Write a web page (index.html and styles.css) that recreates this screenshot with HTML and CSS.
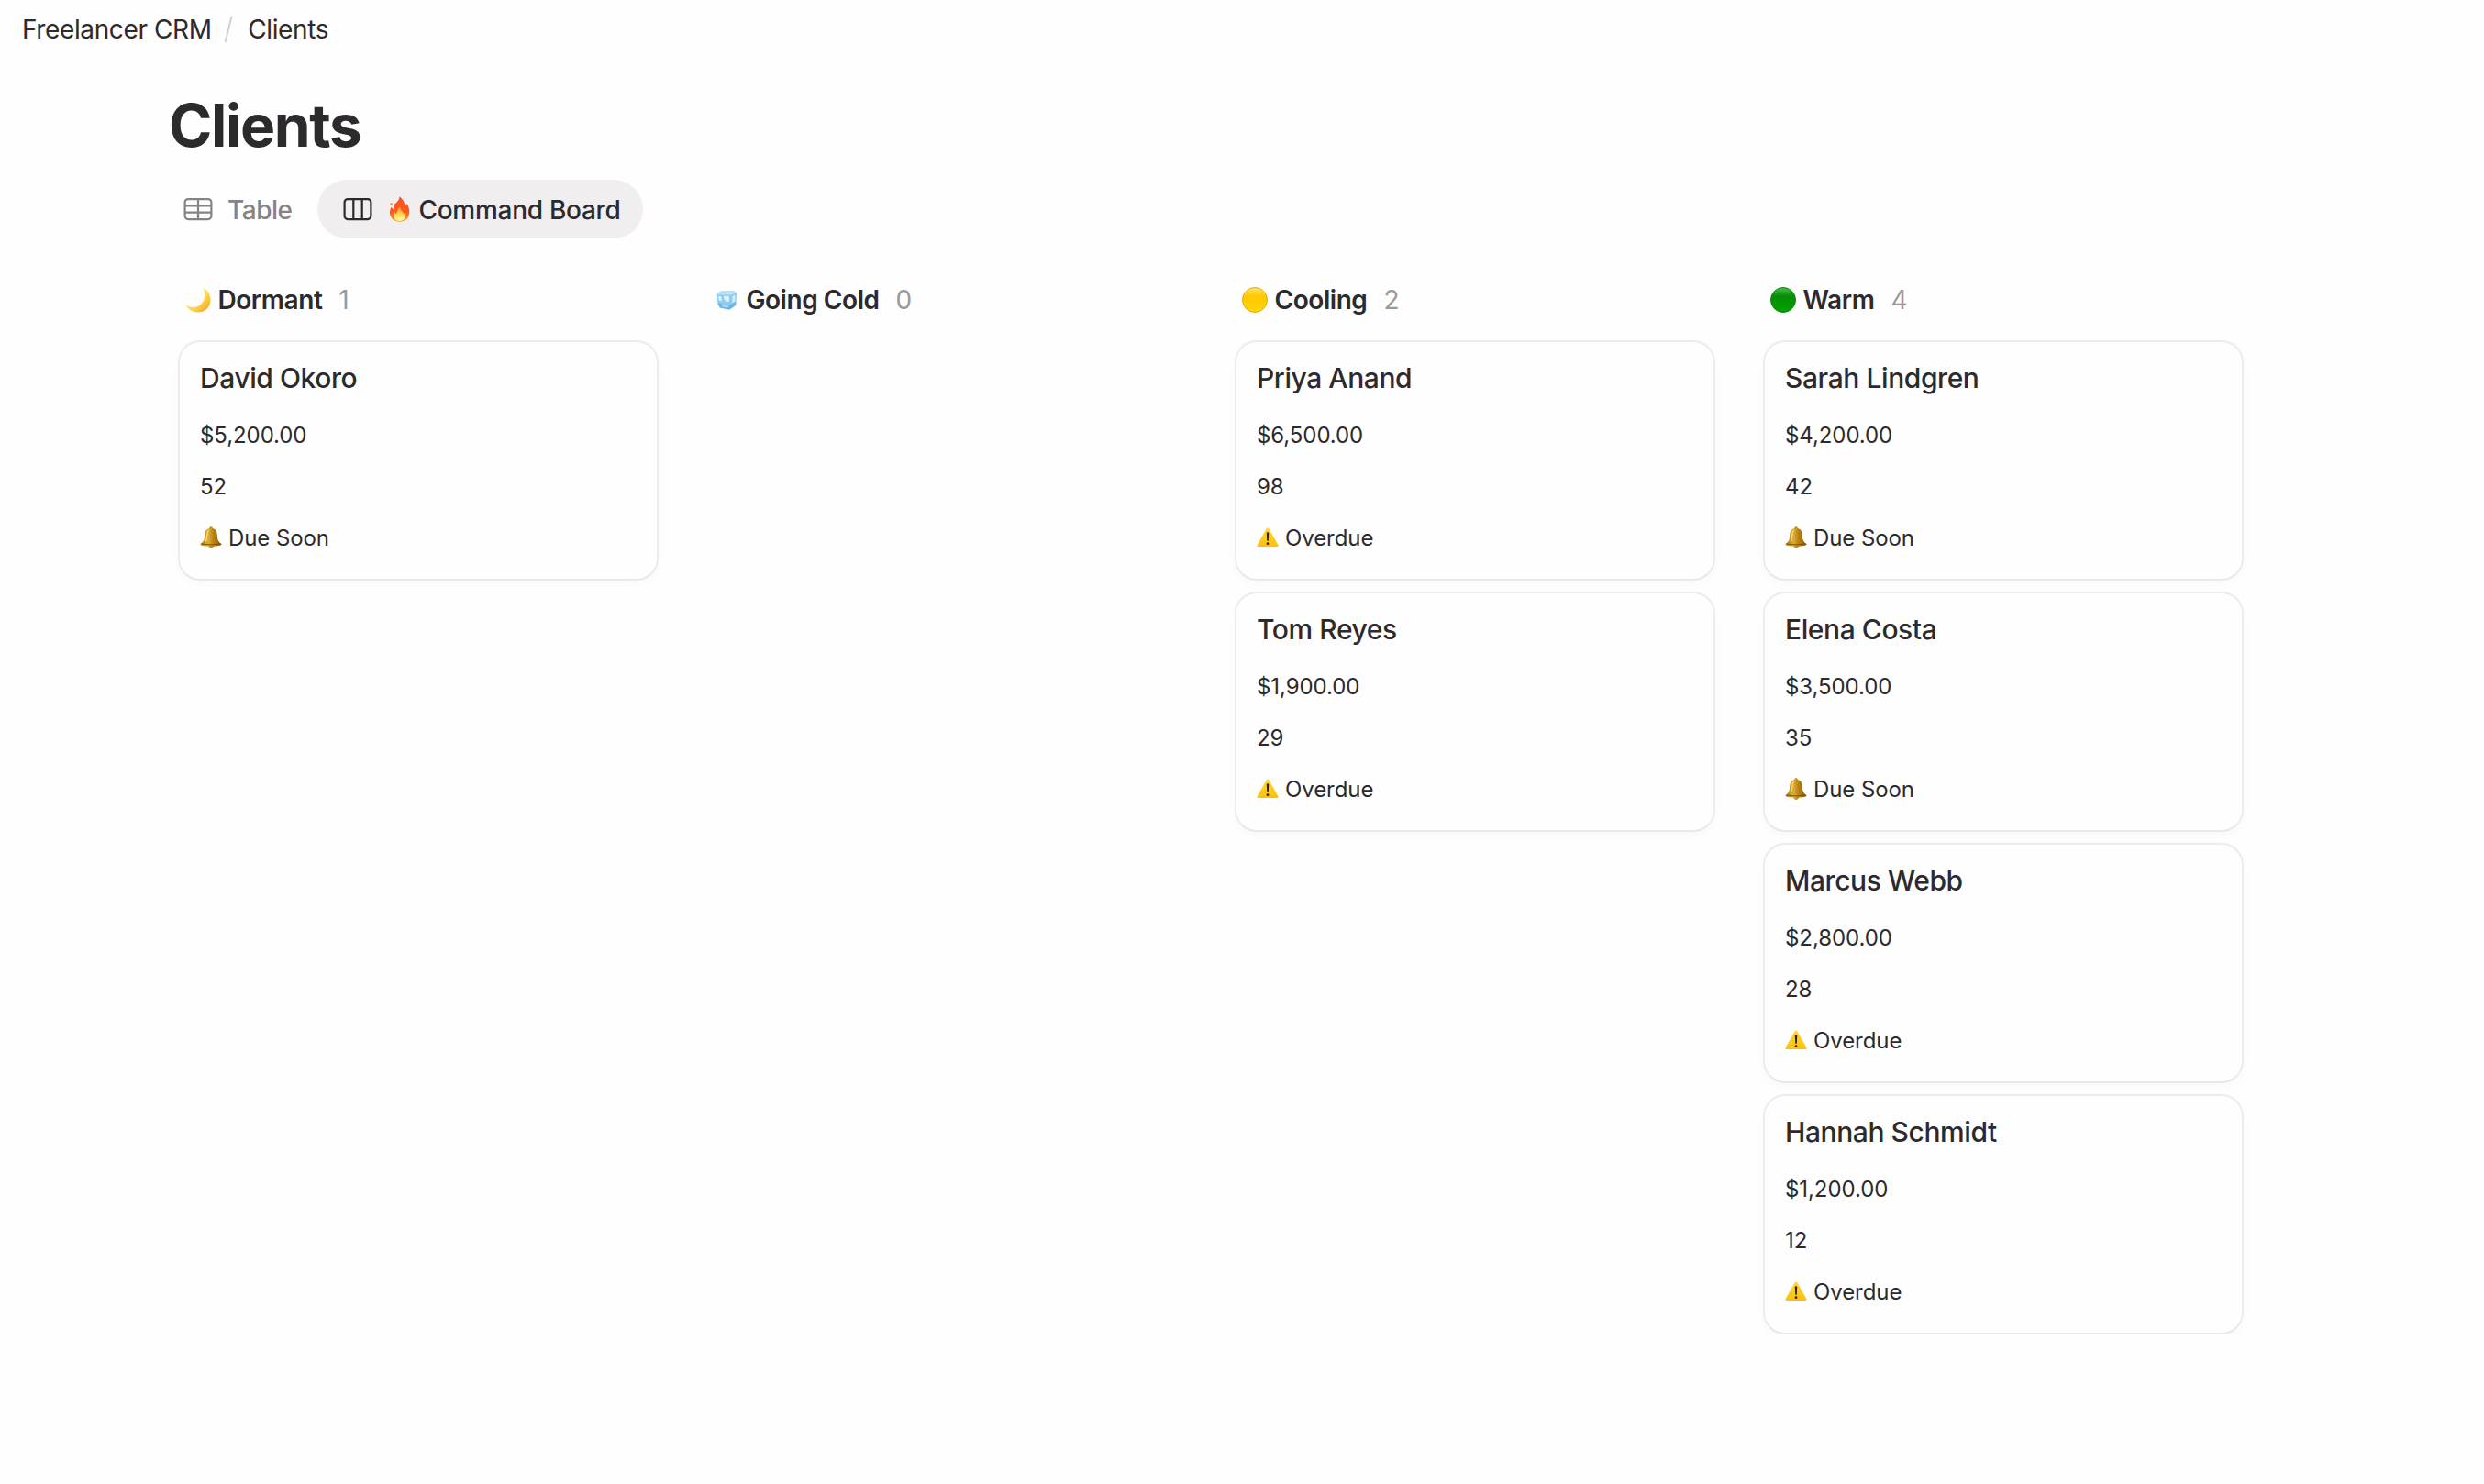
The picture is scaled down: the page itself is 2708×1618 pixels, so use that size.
FILE: index.html
```html
<!DOCTYPE html>
<html lang="en">
<head>
<meta charset="utf-8">
<title>Clients</title>
<link rel="stylesheet" href="styles.css">
</head>
<body>
<svg class="sprite" aria-hidden="true">
  <defs>
    <linearGradient id="g-moon" x1="0" y1="0" x2="1" y2="1"><stop offset="0" stop-color="#fff0a0"/><stop offset=".6" stop-color="#ffd34a"/><stop offset="1" stop-color="#e89a1c"/></linearGradient>
    <linearGradient id="g-yellow" x1="0" y1="0" x2="0" y2="1"><stop offset="0" stop-color="#ffe36e"/><stop offset=".35" stop-color="#ffc800"/><stop offset="1" stop-color="#ffd60a"/></linearGradient>
    <linearGradient id="g-green" x1="0" y1="0" x2="0" y2="1"><stop offset="0" stop-color="#4cc04c"/><stop offset=".35" stop-color="#088c08"/><stop offset="1" stop-color="#00a400"/></linearGradient>
    <linearGradient id="g-fire" x1="0" y1="0" x2="0" y2="1"><stop offset="0" stop-color="#f4511e"/><stop offset=".6" stop-color="#ff5a1a"/><stop offset="1" stop-color="#ff9a1f"/></linearGradient>
    <linearGradient id="g-flame" x1="0" y1="0" x2="0" y2="1"><stop offset="0" stop-color="#ff9a20"/><stop offset=".5" stop-color="#ffd84a"/><stop offset="1" stop-color="#fff6b0"/></linearGradient>
    <linearGradient id="g-bell" x1="0" y1="0" x2="1" y2="0"><stop offset="0" stop-color="#b07a10"/><stop offset=".38" stop-color="#deae34"/><stop offset=".6" stop-color="#b98418"/><stop offset="1" stop-color="#8a5a10"/></linearGradient>
    <linearGradient id="g-warn" x1="0" y1="0" x2="0" y2="1"><stop offset="0" stop-color="#ffd83a"/><stop offset="1" stop-color="#fdbf08"/></linearGradient>
  </defs>
  <symbol id="moon" viewBox="0 0 28 28"><path d="M19.500 .8C25 4 28 9 27.400 15.500C26.600 23 21 27.500 14 27.500C8 27.500 3 24.500 .6 19.500C5 22.500 11 22.800 15.500 20C21 16.500 23 8 19.500 .8Z" fill="url(#g-moon)"/></symbol>
  <symbol id="ice" viewBox="1.500 2 21.500 21"><path d="M2 5.500L7 3L19 3L22.500 5L21.500 18L15 22.500L5 20.500L2.500 17Z" fill="#8fcbf2"/><path d="M2 5.500L7 3L19 3L22.500 5L16 7.500L3 7Z" fill="#b9e2f8"/><path d="M3.500 8.500L6.500 9V14L4 13Z" fill="#e3f5fe"/><path d="M9 8.500L14.500 9V14.500L11.500 14L9 11.500Z" fill="#dcf2fd"/><path d="M18 9L20.800 7.500L20.500 14L18 15.500Z" fill="#d5effd"/><path d="M3 15.500L10 17.500L16 17.500L21.500 14.500L21.500 18L15 22.500L5 20.500Z" fill="#6fb3e6"/><path d="M7 17.500L14 18.500V20.500L7 19.500Z" fill="#a7dcf8"/></symbol>
  <symbol id="yellow" viewBox="0 0 28 28"><circle cx="14" cy="14" r="13.500" fill="url(#g-yellow)" stroke="#e9a80c"/></symbol>
  <symbol id="green" viewBox="0 0 28 28"><circle cx="14" cy="14" r="13.500" fill="url(#g-green)" stroke="#0a840a"/></symbol>
  <symbol id="fire" viewBox="0 0 24 28"><path d="M11.500 .3C15 3 17.500 6.500 17.600 11C18.600 10 19 8.500 18.800 7.500C21.500 10.500 22.600 14 22.200 18.500C21.600 24 17.600 27.700 11.800 27.700C6 27.700 1.500 24 .9 18.500C.7 15.500 1.800 13.500 2.600 11.500C3.300 12.800 4 13.600 5 14C4.500 11 6 8.500 8.500 6.500C10.500 4.500 11.500 2.800 11.500 .3Z" fill="url(#g-fire)"/><circle cx="2.600" cy="8.500" r="1.200" fill="#ff7a3a"/><path d="M11.500 11C12 15 15.500 16.500 16 19.500C16.800 19 17.200 18.200 17.200 17C19.300 20 18.600 27 11.700 27C5 27 4.200 21 6.500 17.500C6.800 18.500 7.500 19.200 8.400 19.500C8 16.500 10.500 14.500 11.500 11Z" fill="url(#g-flame)"/></symbol>
  <symbol id="bell" viewBox="0 0 24 24"><path d="M12 0C13.300 0 13.800 1 13.800 2C17.500 2.800 18.800 6 18.900 10C19 14.500 20 16.500 23.500 19.200C24 20.300 21 21.200 15 21.600C14.700 23 13.600 24 12 24C10.400 24 9.300 23 9 21.600C3 21.200 0 20.300 .5 19.200C4 16.500 5 14.500 5.100 10C5.200 6 6.500 2.800 10.200 2C10.200 1 10.700 0 12 0Z" fill="url(#g-bell)"/><path d="M1.500 18.800C7 20.200 17 20.200 22.500 18.800" fill="none" stroke="#7a5010" stroke-width="1"/><path d="M9 4.500C7.500 7 8 13 6.500 16" fill="none" stroke="#f8dc7a" stroke-width="1.400" stroke-linecap="round"/></symbol>
  <symbol id="warn" viewBox="0 0 24 24"><path d="M12 1.600C12.700 1.600 13.200 2 13.600 2.700L23.400 20.300C24 21.500 23.500 22 22.400 22H1.600C.5 22 0 21.500 .6 20.300L10.400 2.700C10.800 2 11.300 1.600 12 1.600Z" fill="url(#g-warn)"/><path d="M10.800 7.400C10.800 5.800 13.200 5.800 13.200 7.400L12.800 15.200C12.700 16.300 11.300 16.300 11.200 15.200Z" fill="#2b2410"/><circle cx="12" cy="18.700" r="1.400" fill="#2b2410"/></symbol>
</svg>

<nav class="crumbs"><span class="crumb">Freelancer CRM</span><svg class="slash" viewBox="0 0 12 30"><path d="M9.500 1L2.500 29" stroke="#d2d0d3" stroke-width="2"/></svg><span class="crumb">Clients</span></nav>

<main class="page">
  <h1 class="title">Clients</h1>
  <div class="tabs">
    <div class="tab"><svg class="tab-icon" viewBox="0 0 32 26"><g fill="none" stroke="currentColor" stroke-width="2.200"><rect x="1.600" y="2.100" width="28.800" height="22" rx="3.500"/><path d="M1.600 9.500H30.400M1.600 16.700H30.400M16 2.100V24.100"/></g></svg><span class="tab-label">Table</span></div>
    <div class="tab active"><svg class="tab-icon" viewBox="0 0 32 26"><g fill="none" stroke="currentColor" stroke-width="2.200"><rect x="1.600" y="2.100" width="28.800" height="22" rx="3.500"/><path d="M11.300 2.100V24.100M20.700 2.100V24.100"/></g></svg><svg class="fire"><use href="#fire"/></svg><span class="tab-label">Command Board</span></div>
  </div>

  <div class="board">
    <section class="column">
      <header class="column-head"><svg class="emoji"><use href="#moon"/></svg><span class="name">Dormant</span><span class="count">1</span></header>
      <article class="card"><h2 class="client">David Okoro</h2><p class="field">$5,200.00</p><p class="field">52</p><p class="field"><svg class="status"><use href="#bell"/></svg><span>Due Soon</span></p></article>
    </section>
    <section class="column">
      <header class="column-head"><svg class="emoji cube"><use href="#ice"/></svg><span class="name">Going Cold</span><span class="count">0</span></header>
    </section>
    <section class="column">
      <header class="column-head"><svg class="emoji"><use href="#yellow"/></svg><span class="name">Cooling</span><span class="count">2</span></header>
      <article class="card"><h2 class="client">Priya Anand</h2><p class="field">$6,500.00</p><p class="field">98</p><p class="field"><svg class="status"><use href="#warn"/></svg><span>Overdue</span></p></article>
      <article class="card"><h2 class="client">Tom Reyes</h2><p class="field">$1,900.00</p><p class="field">29</p><p class="field"><svg class="status"><use href="#warn"/></svg><span>Overdue</span></p></article>
    </section>
    <section class="column">
      <header class="column-head"><svg class="emoji"><use href="#green"/></svg><span class="name">Warm</span><span class="count">4</span></header>
      <article class="card"><h2 class="client">Sarah Lindgren</h2><p class="field">$4,200.00</p><p class="field">42</p><p class="field"><svg class="status"><use href="#bell"/></svg><span>Due Soon</span></p></article>
      <article class="card"><h2 class="client">Elena Costa</h2><p class="field">$3,500.00</p><p class="field">35</p><p class="field"><svg class="status"><use href="#bell"/></svg><span>Due Soon</span></p></article>
      <article class="card"><h2 class="client">Marcus Webb</h2><p class="field">$2,800.00</p><p class="field">28</p><p class="field"><svg class="status"><use href="#warn"/></svg><span>Overdue</span></p></article>
      <article class="card"><h2 class="client">Hannah Schmidt</h2><p class="field">$1,200.00</p><p class="field">12</p><p class="field"><svg class="status"><use href="#warn"/></svg><span>Overdue</span></p></article>
    </section>
  </div>
</main>
</body>
</html>
```
FILE: styles.css
```css
* { box-sizing: border-box; }
body { margin: 0; background: #fefefe; color: #2c2a2d; font-family: Inter, "Liberation Sans", sans-serif; }
h1, h2, p { margin: 0; }
.sprite { position: absolute; width: 0; height: 0; }
svg { display: block; flex: none; }

.crumbs { display: flex; align-items: center; height: 64px; padding-left: 24px; font-size: 28px; line-height: 64px; letter-spacing: -.38px; }
.slash { width: 12px; height: 30px; margin: 0 15px 0 12.500px; }

.page { padding: 32px 184px 0; }
.title { font-size: 64px; font-weight: 700; line-height: 82px; letter-spacing: -1.33px; }
.tabs { display: flex; margin-top: 18px; }
.tab { display: flex; align-items: center; height: 64px; padding: 0 28px 0 16px; border-radius: 32px; font-size: 28px; font-weight: 500; letter-spacing: -.5px; color: #858386; }
.tab.active { background: #f1eef0; color: #2c2a2d; padding: 0 24px 0 28px; letter-spacing: -.28px; }
.tab-label { padding-top: 2px; }
.tab-icon { width: 32px; height: 26px; margin-right: 16px; }
.active .tab-icon { margin-right: 18px; }
.fire { width: 24px; height: 28px; margin-right: 8px; }

.board { display: flex; gap: 52px; padding: 35px 0 0 10px; }
.column { display: flex; flex-direction: column; gap: 12px; width: 524px; }
.column-head { display: flex; align-items: center; height: 64px; padding-left: 8px; font-size: 28px; }
.emoji { width: 28px; height: 28px; margin-right: 7.500px; }
.cube { width: 23px; height: 22px; margin: 0 9.500px 0 3px; }
.name { font-weight: 560; letter-spacing: -.45px; }
.count { margin-left: 18px; color: #9a989b; }
.card { height: 262px; padding: 15px 22px; background: #fefefe; border: 2px solid #eeebef; border-bottom-color: #e9e7ea; border-radius: 24px; box-shadow: 0 4px 12px rgba(60, 20, 80, .025); }
.client { margin-bottom: 11px; font-size: 30px; font-weight: 500; line-height: 48px; letter-spacing: -.42px; }
.field { display: flex; align-items: flex-start; height: 56px; font-size: 24px; line-height: 55px; letter-spacing: -.08px; }
.status { width: 24px; height: 24px; margin: 15px 7px 0 0; }
```
